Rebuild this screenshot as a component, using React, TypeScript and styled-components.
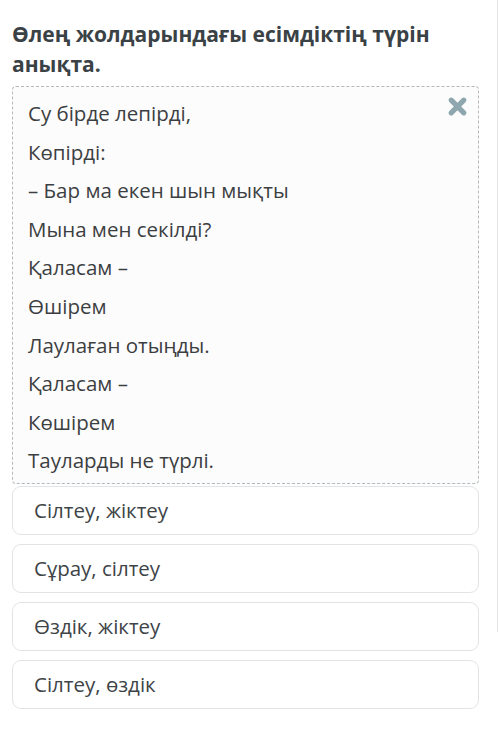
import styled, { createGlobalStyle } from "styled-components";

const GlobalStyle = createGlobalStyle`
  body {
    margin: 0;
    background: #ffffff;
    font-family: "Open Sans", "Noto Sans", sans-serif;
  }
`;

const Page = styled.div`
  display: flex;
  width: 500px;
`;

const Content = styled.div`
  flex: 1;
  padding: 19px 0 0 12px;
`;

const Rail = styled.div`
  width: 1px;
  height: 632px;
  margin-right: 2px;
  background: #e2e4e6;
`;

const Title = styled.h1`
  margin: 0 0 7px;
  width: 440px;
  font-size: 21px;
  line-height: 30px;
  font-weight: 700;
  color: #3a4246;
`;

const Poem = styled.div`
  position: relative;
  width: 467px;
  box-sizing: border-box;
  border: 1.5px dashed #b3b9bd;
  border-radius: 4px;
  background: #fcfcfc;
  padding: 7px 0 3px 15px;
`;

const Line = styled.div`
  font-size: 20.5px;
  line-height: 38.6px;
  color: #3c3f42;
`;

const Close = styled.svg`
  position: absolute;
  top: 9px;
  right: 10px;
  width: 21px;
  height: 21px;
`;

const Options = styled.div`
  display: flex;
  flex-direction: column;
  gap: 9px;
  margin-top: 2px;
  width: 467px;
`;

const Option = styled.div`
  height: 49px;
  box-sizing: border-box;
  border: 1.5px solid #e1e4e6;
  border-radius: 9px;
  background: #ffffff;
  padding-left: 21px;
  display: flex;
  align-items: center;
  font-size: 20.5px;
  color: #3e4447;
`;

const poem = [
  "Су бірде лепірді,",
  "Көпірді:",
  "– Бар ма екен шын мықты",
  "Мына мен секілді?",
  "Қаласам –",
  "Өшірем",
  "Лаулаған отыңды.",
  "Қаласам –",
  "Көшірем",
  "Тауларды не түрлі.",
];

const answers = [
  "Сілтеу, жіктеу",
  "Сұрау, сілтеу",
  "Өздік, жіктеу",
  "Сілтеу, өздік",
];

export default function App() {
  return (
    <>
      <GlobalStyle />
      <Page>
        <Content>
          <Title>Өлең жолдарындағы есімдіктің түрін анықта.</Title>
          <Poem>
            <Close viewBox="0 0 20 20">
              <path
                d="M4 4 L16 16 M16 4 L4 16"
                stroke="#8ea6ae"
                strokeWidth="5"
                strokeLinecap="round"
              />
            </Close>
            {poem.map((line, i) => (
              <Line key={i}>{line}</Line>
            ))}
          </Poem>
          <Options>
            {answers.map((a) => (
              <Option key={a}>{a}</Option>
            ))}
          </Options>
        </Content>
        <Rail />
      </Page>
    </>
  );
}
